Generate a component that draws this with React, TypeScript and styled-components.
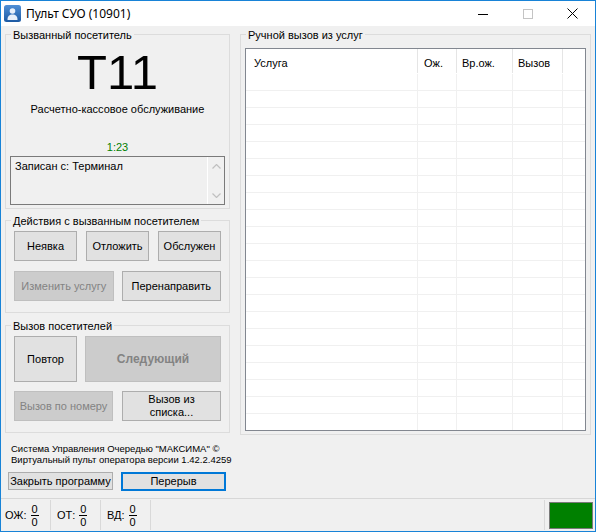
import React from 'react';
import styled, { createGlobalStyle } from 'styled-components';

const Global = createGlobalStyle`
  html, body { margin: 0; padding: 0; background: #ffffff; }
  body { font-family: "Liberation Sans", Arial, sans-serif; font-size: 11px; color: #000; }
  * { box-sizing: border-box; }
`;

const Window = styled.div`
  width: 596px;
  height: 532px;
  border: 1px solid #1883d7;
  background: #f0f0f0;
  display: flex;
  flex-direction: column;
  overflow: hidden;
`;

const TitleBar = styled.div`
  height: 25px;
  flex: 0 0 25px;
  background: #ffffff;
  display: flex;
  align-items: center;
`;

const AppIcon = styled.svg`
  margin-left: 3px;
  width: 17px;
  height: 17px;
  flex: 0 0 17px;
`;

const TitleText = styled.div`
  margin-left: 5px;
  font-family: "Noto Sans", "Liberation Sans", sans-serif;
  font-size: 12px;
  color: #000;
  line-height: 16px;
`;

const Controls = styled.div`
  margin-left: auto;
  display: flex;
  height: 25px;
`;

const CtrlBtn = styled.div`
  width: 45px;
  height: 25px;
  display: flex;
  align-items: center;
  justify-content: center;
`;

const Body = styled.div`
  flex: 1;
  display: flex;
  align-items: flex-start;
  gap: 10px;
  padding: 1px 4px 0 4px;
`;

const LeftCol = styled.div`
  width: 225px;
  flex: 0 0 225px;
  display: flex;
  flex-direction: column;
`;

const Group = styled.fieldset<{ $mt?: number; $w?: number }>`
  margin: ${p => p.$mt ?? 0}px 0 0 0;
  padding: 0;
  border: 1px solid #dcdcdc;
  min-width: 0;
  ${p => (p.$w ? `width: ${p.$w}px; flex: 0 0 ${p.$w}px;` : '')}
`;

const Legend = styled.legend`
  padding: 2px 2px 0 2px;
  margin-left: 5px;
  line-height: 13px;
  font-size: 11px;
`;

const CalledInner = styled.div`
  display: flex;
  flex-direction: column;
  align-items: center;
  padding: 0 4px 3px 4px;
`;

const BigCode = styled.div`
  margin-top: 5px;
  font-size: 49px;
  line-height: 50px;
  height: 50px;
`;

const ServiceName = styled.div`
  margin-top: 6px;
  line-height: 13px;
`;

const Timer = styled.div`
  margin-top: 25px;
  line-height: 13px;
  color: #008000;
`;

const TextBox = styled.div`
  margin-top: 2px;
  width: 100%;
  height: 49px;
  border: 1px solid #7a7a7a;
  display: flex;
`;

const TextBoxText = styled.div`
  flex: 1;
  padding: 3px 0 0 4px;
  line-height: 13px;
`;

const ScrollBar = styled.div`
  width: 17px;
  border-left: 1px solid #ffffff;
  display: flex;
  flex-direction: column;
  justify-content: space-between;
  align-items: center;
  padding: 7px 0 6px 0;
`;

const ButtonsInner = styled.div<{ $pb: number; $gap: number }>`
  display: flex;
  flex-direction: column;
  gap: ${p => p.$gap}px;
  padding: 3px 8px ${p => p.$pb}px 8px;
`;

const Row = styled.div<{ $cols: string; $gap: number }>`
  display: grid;
  grid-template-columns: ${p => p.$cols};
  column-gap: ${p => p.$gap}px;
`;

const Btn = styled.button<{ $off?: boolean; $bold?: boolean; $focus?: boolean; $h: number; $w?: number }>`
  font-family: "Liberation Sans", Arial, sans-serif;
  font-size: ${p => (p.$bold ? 12 : 11)}px;
  font-weight: ${p => (p.$bold ? 700 : 400)};
  line-height: 13px;
  color: ${p => (p.$off ? '#838383' : '#000000')};
  background: ${p => (p.$off ? '#cccccc' : '#e1e1e1')};
  border: ${p => (p.$focus ? '2px solid #0078d7' : `1px solid ${p.$off ? '#bfbfbf' : '#adadad'}`)};
  height: ${p => p.$h}px;
  ${p => (p.$w ? `width: ${p.$w}px;` : '')}
  margin: 0;
  padding: 0;
  text-align: center;
`;

const Copyright = styled.div`
  margin-top: 10px;
  padding-left: 6px;
  font-size: 9.5px;
  line-height: 11px;
  white-space: nowrap;
`;

const BottomRow = styled.div`
  margin-top: 7px;
  padding-left: 3px;
  display: flex;
  align-items: flex-start;
  gap: 8px;
`;

const ListGroupInner = styled.div`
  padding: 6px 4px 3px 4px;
`;

const ListView = styled.div`
  height: 383px;
  border: 1px solid #828790;
  background: #ffffff;
  overflow: hidden;
`;

const GridRow = styled.div<{ $h: number; $line?: boolean }>`
  display: grid;
  grid-template-columns: 172px 39px 56px 50px 1fr;
  height: ${p => p.$h}px;
  border-bottom: ${p => (p.$line ? '1px solid #f0f0f0' : 'none')};
`;

const HeadCell = styled.div<{ $pl: number; $sep: boolean }>`
  padding: 8px 0 0 ${p => p.$pl}px;
  line-height: 13px;
  border-right: ${p => (p.$sep ? '1px solid #e5e5e5' : 'none')};
  margin-bottom: 1px;
`;

const Cell = styled.div<{ $sep: boolean }>`
  border-right: ${p => (p.$sep ? '1px solid #f0f0f0' : 'none')};
`;

const StatusBar = styled.div`
  flex: 0 0 33px;
  height: 33px;
  border-top: 1px solid #d7d7d7;
  display: flex;
  align-items: stretch;
  padding-right: 2px;
`;

const StatusCell = styled.div<{ $pl: number; $w?: number }>`
  ${p => (p.$w ? `width: ${p.$w}px; flex: 0 0 ${p.$w}px;` : 'flex: 1;')}
  margin: 1px 0 1px 0;
  border-right: 1px solid #d9d9d9;
  padding-left: ${p => p.$pl}px;
  display: flex;
  align-items: center;
`;

const StatLabel = styled.span`
  line-height: 13px;
`;

const Fraction = styled.div`
  margin-left: 4px;
  display: flex;
  flex-direction: column;
  align-items: stretch;
  text-align: center;
`;

const Num = styled.div<{ $bar?: boolean }>`
  line-height: 12px;
  padding: 0 1px;
  border-bottom: ${p => (p.$bar ? '1px solid #000' : 'none')};
`;

const Indicator = styled.div`
  width: 44px;
  height: 27px;
  margin: 3px 0 0 4px;
  background: #008000;
  border: 1px solid #7a7a7a;
`;

const Chevron = ({ up }: { up?: boolean }) => (
  <svg width="9" height="5" viewBox="0 0 9 5">
    <path d={up ? 'M0.5 4.5 L4.5 0.5 L8.5 4.5' : 'M0.5 0.5 L4.5 4.5 L8.5 0.5'} fill="none" stroke="#c0c0c0" strokeWidth="1.2" />
  </svg>
);

const columns = [
  { t: 'Услуга', pl: 8 },
  { t: 'Ож.', pl: 6 },
  { t: 'Вр.ож.', pl: 5 },
  { t: 'Вызов', pl: 5 },
  { t: '', pl: 0 },
];

const Stat = ({ label, pl, w }: { label: string; pl: number; w: number }) => (
  <StatusCell $pl={pl} $w={w}>
    <StatLabel>{label}</StatLabel>
    <Fraction>
      <Num $bar>0</Num>
      <Num>0</Num>
    </Fraction>
  </StatusCell>
);

export default function App() {
  const rows = Array.from({ length: 21 });
  return (
    <>
      <Global />
      <Window>
        <TitleBar>
          <AppIcon viewBox="0 0 17 17">
            <defs>
              <linearGradient id="ig" x1="0" y1="0" x2="0" y2="1">
                <stop offset="0" stopColor="#4f8fd6" />
                <stop offset="1" stopColor="#1d5aa3" />
              </linearGradient>
            </defs>
            <rect x="0" y="0" width="17" height="17" rx="2.5" fill="url(#ig)" />
            <circle cx="8.5" cy="6" r="2.8" fill="#e8f0fa" />
            <path d="M3.5 15 C3.5 11 5.5 9.6 8.5 9.6 C11.5 9.6 13.5 11 13.5 15 Z" fill="#e8f0fa" />
          </AppIcon>
          <TitleText>Пульт СУО (10901)</TitleText>
          <Controls>
            <CtrlBtn>
              <svg width="10" height="10" viewBox="0 0 10 10">
                <rect x="0" y="5" width="10" height="1" fill="#000" />
              </svg>
            </CtrlBtn>
            <CtrlBtn>
              <svg width="10" height="10" viewBox="0 0 10 10">
                <rect x="0.5" y="0.5" width="9" height="9" fill="none" stroke="#c4c4c4" strokeWidth="1" />
              </svg>
            </CtrlBtn>
            <CtrlBtn>
              <svg width="11" height="11" viewBox="0 0 11 11">
                <path d="M0.5 0.5 L10.5 10.5 M10.5 0.5 L0.5 10.5" stroke="#000" strokeWidth="1" />
              </svg>
            </CtrlBtn>
          </Controls>
        </TitleBar>

        <Body>
          <LeftCol>
            <Group>
              <Legend>Вызванный посетитель</Legend>
              <CalledInner>
                <BigCode>T11</BigCode>
                <ServiceName>Расчетно-кассовое обслуживание</ServiceName>
                <Timer>1:23</Timer>
                <TextBox>
                  <TextBoxText>Записан с: Терминал</TextBoxText>
                  <ScrollBar>
                    <Chevron up />
                    <Chevron />
                  </ScrollBar>
                </TextBox>
              </CalledInner>
            </Group>

            <Group $mt={4}>
              <Legend>Действия с вызванным посетителем</Legend>
              <ButtonsInner $pb={11} $gap={10}>
                <Row $cols="1fr 1fr 1fr" $gap={9}>
                  <Btn $h={30}>Неявка</Btn>
                  <Btn $h={30}>Отложить</Btn>
                  <Btn $h={30}>Обслужен</Btn>
                </Row>
                <Row $cols="1fr 1fr" $gap={8}>
                  <Btn $h={30} $off disabled>Изменить услугу</Btn>
                  <Btn $h={30}>Перенаправить</Btn>
                </Row>
              </ButtonsInner>
            </Group>

            <Group $mt={5}>
              <Legend>Вызов посетителей</Legend>
              <ButtonsInner $pb={11} $gap={9}>
                <Row $cols="63px 1fr" $gap={8}>
                  <Btn $h={46}>Повтор</Btn>
                  <Btn $h={46} $off $bold disabled>Следующий</Btn>
                </Row>
                <Row $cols="1fr 1fr" $gap={9}>
                  <Btn $h={30} $off disabled>Вызов по номеру</Btn>
                  <Btn $h={30}>Вызов из<br />списка...</Btn>
                </Row>
              </ButtonsInner>
            </Group>

            <Copyright>
              Система Управления Очередью "МАКСИМА" ©
              <br />
              Виртуальный пульт оператора версии 1.42.2.4259
            </Copyright>

            <BottomRow>
              <Btn $h={18} $w={105}>Закрыть программу</Btn>
              <Btn $h={19} $w={105} $focus>Перерыв</Btn>
            </BottomRow>
          </LeftCol>

          <Group $w={351}>
            <Legend>Ручной вызов из услуг</Legend>
            <ListGroupInner>
              <ListView>
                <GridRow $h={25}>
                  {columns.map((c, i) => (
                    <HeadCell key={i} $pl={c.pl} $sep={i < 4}>{c.t}</HeadCell>
                  ))}
                </GridRow>
                {rows.map((_, r) => (
                  <GridRow key={r} $h={17} $line>
                    {columns.map((_, i) => (
                      <Cell key={i} $sep={i < 4} />
                    ))}
                  </GridRow>
                ))}
              </ListView>
            </ListGroupInner>
          </Group>
        </Body>

        <StatusBar>
          <Stat label="ОЖ:" pl={4} w={50} />
          <Stat label="ОТ:" pl={6} w={50} />
          <Stat label="ВД:" pl={6} w={50} />
          <StatusCell $pl={0} />
          <Indicator />
        </StatusBar>
      </Window>
    </>
  );
}
